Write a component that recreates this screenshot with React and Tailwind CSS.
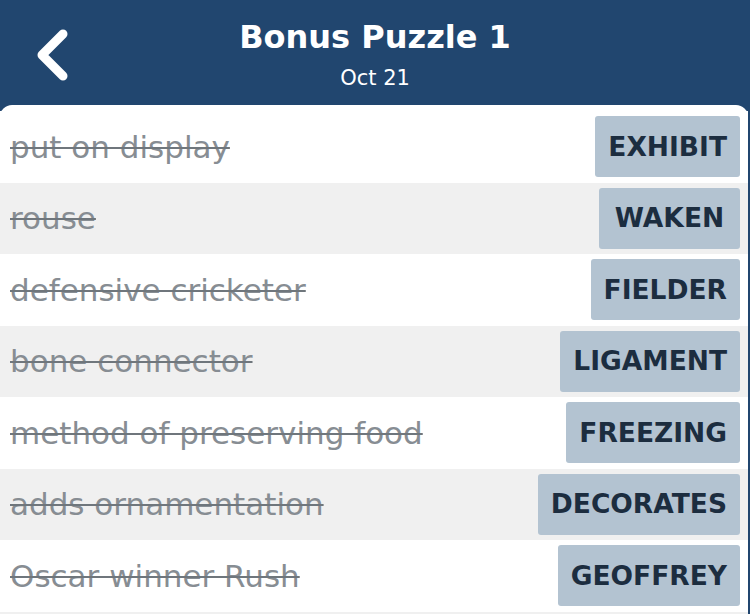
import React from 'react';

const clues = [
  { clue: 'put on display', answer: 'EXHIBIT' },
  { clue: 'rouse', answer: 'WAKEN' },
  { clue: 'defensive cricketer', answer: 'FIELDER' },
  { clue: 'bone connector', answer: 'LIGAMENT' },
  { clue: 'method of preserving food', answer: 'FREEZING' },
  { clue: 'adds ornamentation', answer: 'DECORATES' },
  { clue: 'Oscar winner Rush', answer: 'GEOFFREY' },
];

const App = () => {
  return (
    <div className="h-[614px] w-[750px] overflow-hidden bg-[#21466f] font-['DejaVu_Sans',sans-serif]">
      <div className="relative flex h-[105px] flex-col items-center pt-[15px] text-white">
        <svg
          className="absolute left-[33px] top-[29px]"
          width="38"
          height="52"
          viewBox="0 0 38 52"
        >
          <path d="M30 5 L9 26 L30 47" fill="none" stroke="white" strokeWidth="9" strokeLinecap="round" strokeLinejoin="round" />
        </svg>
        <h1 className="text-[32px] font-bold leading-[44px]">Bonus Puzzle 1</h1>
        <p className="mt-[6px] text-[21px] leading-[26px]">Oct 21</p>
      </div>
      <div className="mr-[2px] rounded-t-[12px] bg-white pt-[6px]">
        {clues.map((c, i) => (
          <div
            key={c.answer}
            className={`flex h-[71.5px] items-center justify-between pl-[10px] pr-[8px] ${i % 2 === 1 ? 'bg-[#f0f0f0]' : 'bg-white'}`}
          >
            <span className="text-[31px] text-[#878d93] line-through decoration-[#6f767c] decoration-2">
              {c.clue}
            </span>
            <span className="flex h-[61px] min-w-[141px] items-center justify-center rounded-[3px] bg-[#b3c3d1] px-[13px] text-[26.5px] font-bold text-[#1c2d3f]">
              {c.answer}
            </span>
          </div>
        ))}
        <div className="h-[20px] bg-[#f0f0f0]" />
      </div>
    </div>
  );
};

export default App;
